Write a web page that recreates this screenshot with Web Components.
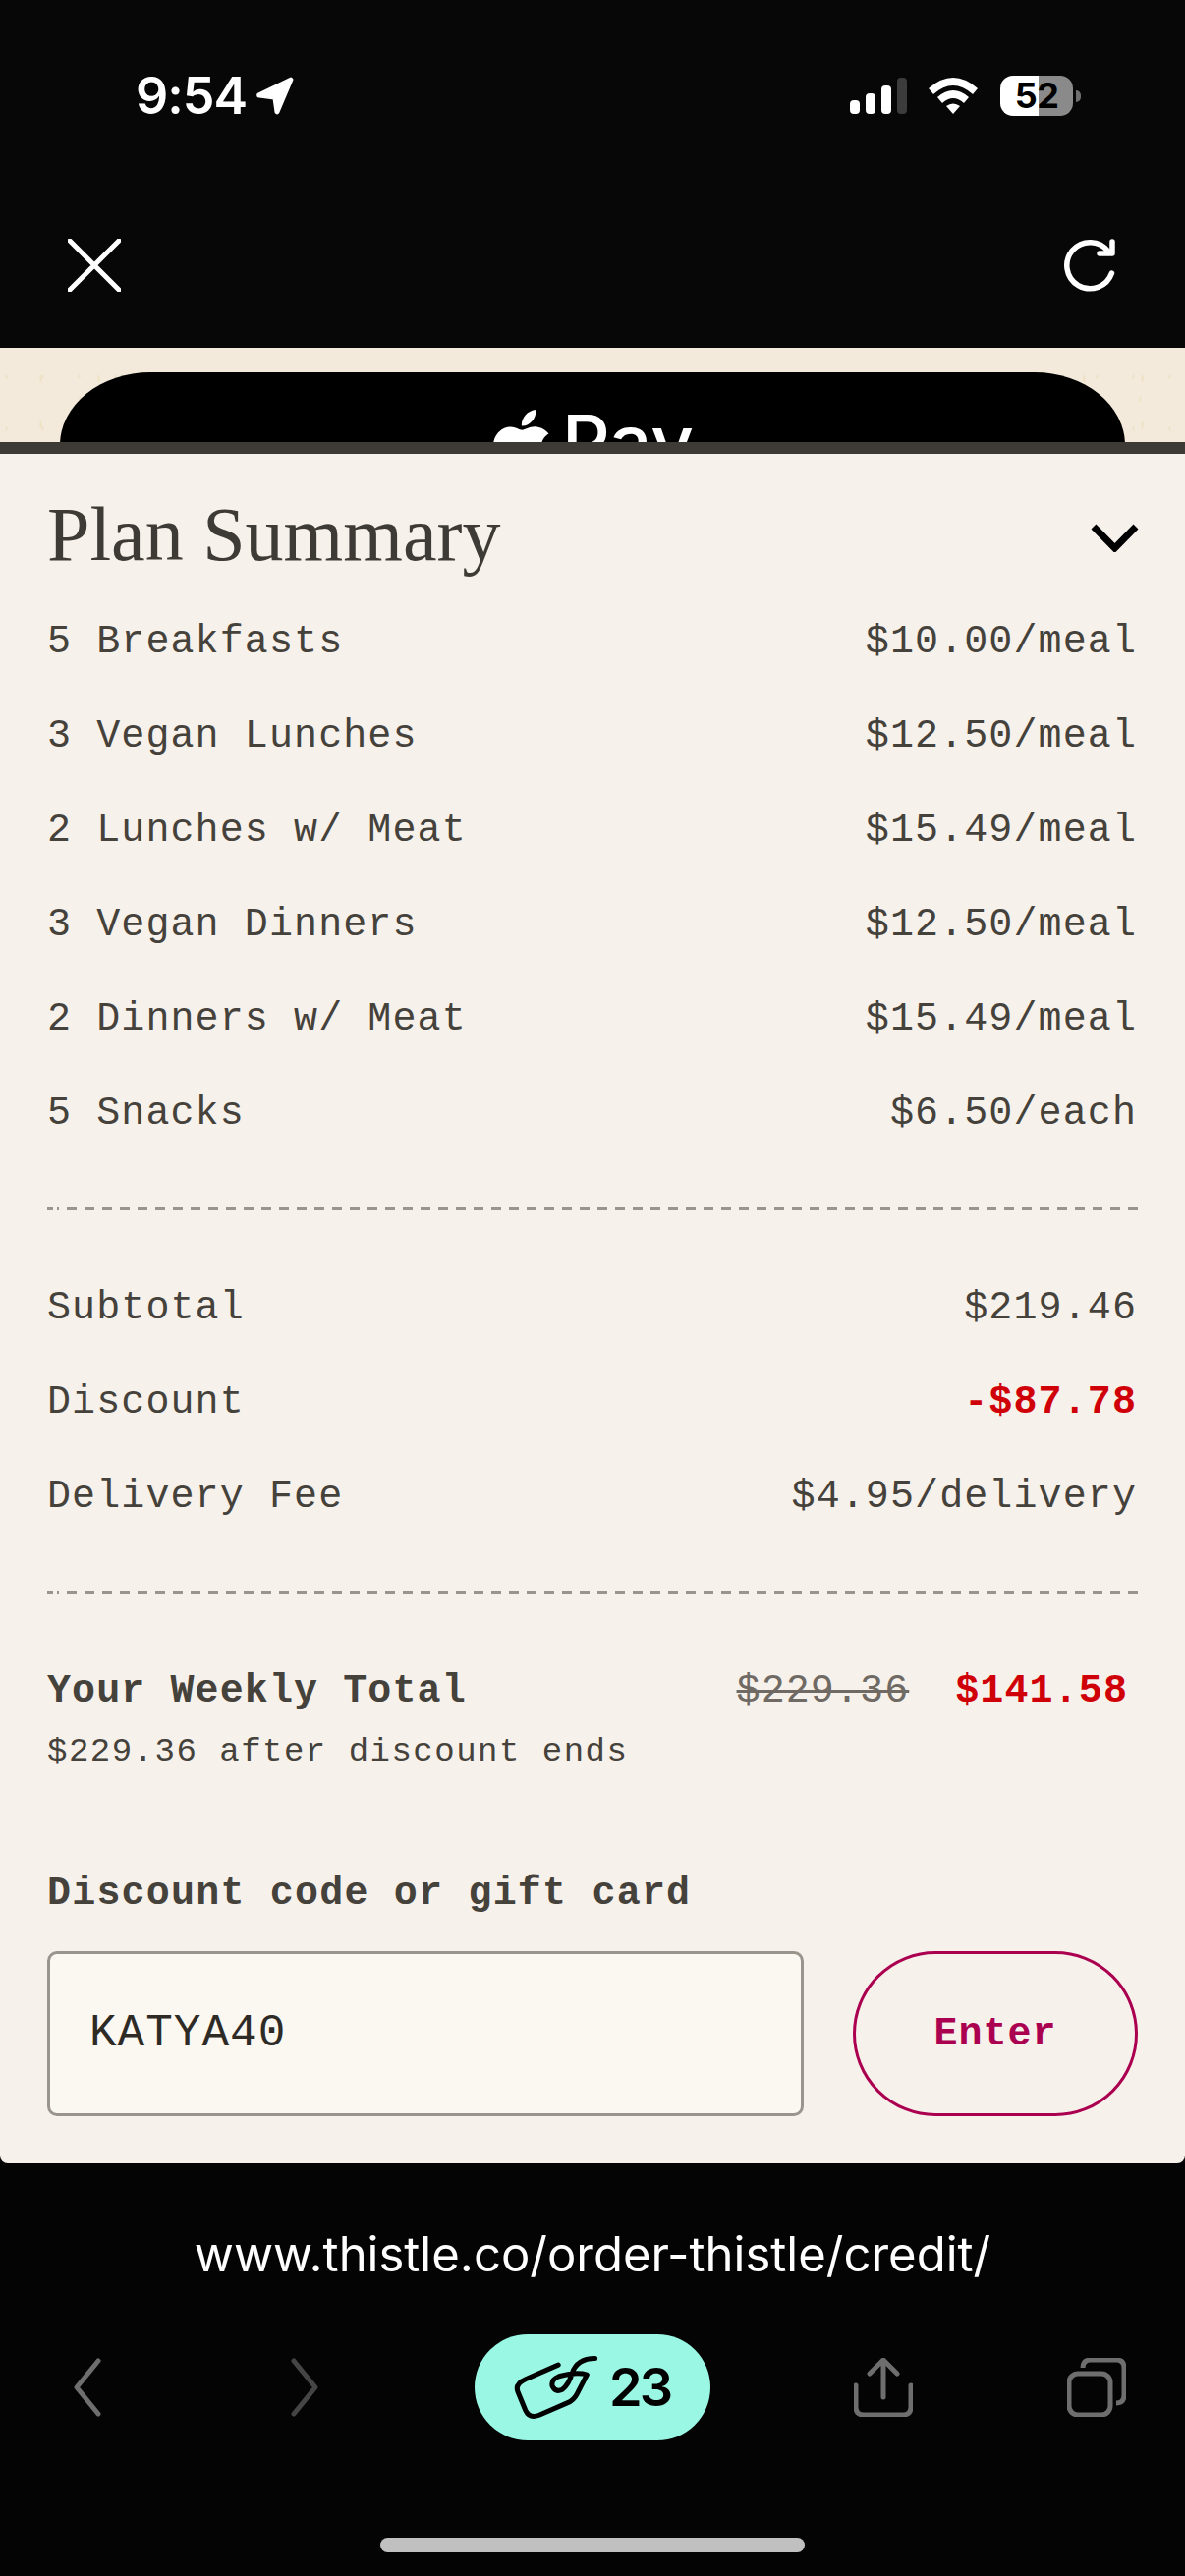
<!DOCTYPE html>
<html>
<head>
<meta charset="utf-8">
<title>Plan Summary</title>
<style>
    html, body { margin: 0; background: #070707; }
    body { width: 1206px; height: 2622px; overflow: hidden; font-family: "Liberation Mono", monospace; }
</style>
</head>
<body>

<template id="status-bar-template">
    <style>
        :host { display: flex; justify-content: space-between; height: 160px; box-sizing: border-box; padding: 77px 106px 0 138px; color: #fff; font-family: Inter, sans-serif; }
        .left { display: flex; gap: 9px; height: 41px; align-items: center; }
        .time { font-size: 52px; font-weight: 600; letter-spacing: -1px; line-height: 41px; }
        .right { display: flex; height: 41px; align-items: center; }
        .battery { margin-left: 23px; width: 74px; height: 41px; border-radius: 13px; background: linear-gradient(90deg, #fff 39px, #8a8a8a 39px); color: #000; font-size: 36px; font-weight: 700; line-height: 41px; text-align: center; letter-spacing: -.5px; }
        .nub { margin-left: 3px; width: 5px; height: 12px; background: #6f6f6f; border-radius: 0 6px 6px 0; }
    </style>
    <div class="left">
        <span class="time">9:54</span>
        <svg width="39" height="39" viewBox="0 0 39 39"><path d="M36 2 3 18q-1 2 1 2l15 2 2 14q1 2 2 0L37 3z" fill="#fff" stroke="#fff" stroke-width="3" stroke-linejoin="round"/></svg>
    </div>
    <div class="right">
        <svg width="58" height="37" viewBox="0 0 58 37">
            <rect x="0" y="23" width="10" height="14" rx="4" fill="#fff"/>
            <rect x="16" y="16" width="10" height="21" rx="4" fill="#fff"/>
            <rect x="32" y="8" width="10" height="29" rx="4" fill="#fff"/>
            <rect x="48" y="0" width="10" height="37" rx="4" fill="#3c3c3c"/>
        </svg>
        <svg width="50" height="37" viewBox="0 0 50 37" style="margin-left:22px">
            <path d="M0 11Q25-11 50 11L45 17Q25-1 5 17Z M9 20Q25 6 41 20L36 26Q25 16 14 26Z M18 29Q25 24 32 29L25 37Z" fill="#fff"/>
        </svg>
        <div class="battery">52</div>
        <div class="nub"></div>
    </div>
</template>

<template id="browser-header-template">
    <style>
        :host { display: flex; justify-content: space-between; height: 194px; box-sizing: border-box; padding: 83px 69px 0; }
        svg { display: block; }
    </style>
    <svg width="54" height="54" viewBox="0 0 54 54"><path d="M2 2 52 52M52 2 2 52" stroke="#fff" stroke-width="5" stroke-linecap="round" fill="none"/></svg>
    <svg width="54" height="54" viewBox="0 0 54 54"><path d="M48.500 35A23.500 23.500 0 1 1 45 13" stroke="#fff" stroke-width="5.500" stroke-linecap="round" fill="none"/><path d="M49 3V15H36" stroke="#fff" stroke-width="5.500" stroke-linecap="round" stroke-linejoin="round" fill="none"/></svg>
</template>

<template id="pay-peek-template">
    <style>
        :host { display: block; height: 96px; box-sizing: border-box; padding: 25px 61px 0; overflow: hidden; background-color: #f3eadb;
            background-image:
                radial-gradient(ellipse 1.5px 5px, #efe2c4 50%, transparent),
                radial-gradient(ellipse 2px 4px, #f0e4ca 50%, transparent),
                radial-gradient(ellipse 1.5px 3px, #eee2ca 50%, transparent);
            background-size: 59px 47px, 83px 61px, 37px 53px;
            background-position: 12px 8px, 40px 22px, 25px 3px; }
        .button { display: flex; justify-content: center; align-items: flex-start; gap: 5px; height: 200px; box-sizing: border-box; padding: 38px 5px 0 0; background: #000; border-radius: 92px / 74px; color: #fff; }
        .label { font-family: Inter, sans-serif; font-weight: 500; font-size: 76px; line-height: 76px; margin-top: -6px; }
    </style>
    <div class="button">
        <svg width="72" height="72" viewBox="0 0 24 24"><path fill="#fff" d="M12.152 6.896c-.948 0-2.415-1.078-3.96-1.04-2.04.027-3.91 1.183-4.961 3.014-2.117 3.675-.546 9.103 1.519 12.09 1.013 1.454 2.208 3.09 3.792 3.039 1.52-.065 2.09-.987 3.935-.987 1.831 0 2.35.987 3.96.948 1.637-.026 2.676-1.48 3.676-2.948 1.156-1.688 1.636-3.325 1.662-3.415-.039-.013-3.182-1.221-3.22-4.857-.026-3.04 2.48-4.494 2.597-4.559-1.429-2.09-3.623-2.324-4.39-2.376-2-.156-3.675 1.09-4.61 1.09zM15.53 3.83c.843-1.012 1.4-2.427 1.245-3.83-1.207.052-2.662.805-3.532 1.818-.78.896-1.454 2.338-1.273 3.714 1.338.104 2.715-.688 3.559-1.701"/></svg>
        <span class="label">Pay</span>
    </div>
</template>

<template id="plan-card-template">
    <style>
        :host { display: block; height: 1752px; box-sizing: border-box; border-top: 12px solid #3e3a35; padding: 0 48px; background: #f7f1eb; border-radius: 0 0 8px 8px; color: #45413b; }
        header { display: flex; justify-content: space-between; align-items: center; height: 142px; box-sizing: border-box; padding-top: 28px; }
        h2 { margin: -6px 0 0; font: 400 78px/1 "Liberation Serif", serif; color: #3e3a35; }
        svg { display: block; margin-right: -1px; }
    </style>
    <header>
        <h2><slot name="title"></slot></h2>
        <svg width="49" height="29" viewBox="0 0 49 29"><path d="M3 3 24.500 25 46 3" stroke="#000" stroke-width="7" fill="none"/></svg>
    </header>
    <slot></slot>
</template>

<template id="summary-row-template">
    <style>
        :host { display: flex; justify-content: space-between; height: 96px; font-size: 40px; line-height: 99px; letter-spacing: 1.1px; white-space: pre; }
        .value { margin-right: 1px; }
        :host([discount]) .value { color: #cf0007; font-weight: 700; }
    </style>
    <span><slot></slot></span>
    <span class="value"><slot name="value"></slot></span>
</template>

<template id="dash-rule-template">
    <style>
        :host { display: block; height: 3px; margin: 49px 0 50px;
            background:
                linear-gradient(#9a958c, #9a958c) 0 0 / 6px 100% no-repeat,
                repeating-linear-gradient(90deg, #9a958c 0 1.700px, transparent 1.700px 10.300px, #9a958c 10.300px 18px) 10px 0 / 1100px 100% no-repeat; }
    </style>
</template>

<template id="weekly-total-template">
    <style>
        :host { display: block; padding-top: 2px; }
        .top { display: flex; justify-content: space-between; font-size: 40px; line-height: 96px; letter-spacing: 1.1px; font-weight: 700; }
        .prices { display: flex; gap: 47px; margin-right: 10px; }
        .old { font-weight: 400; color: #6f6a64; text-decoration: line-through; text-decoration-thickness: 3px; }
        .new { color: #cf0007; }
        .note { font-size: 34px; line-height: 40px; letter-spacing: 1.5px; margin-top: -7px; }
    </style>
    <div class="top">
        <span>Your Weekly Total</span>
        <span class="prices"><span class="old">$229.36</span><span class="new">$141.58</span></span>
    </div>
    <div class="note">$229.36 after discount ends</div>
</template>

<template id="code-form-template">
    <style>
        :host { display: block; margin-top: 95px; }
        label { display: block; font-size: 40px; line-height: 60px; letter-spacing: 1.2px; font-weight: 700; }
        .row { display: flex; gap: 50px; margin-top: 28px; height: 168px; }
        .field { flex: 1; box-sizing: border-box; border: 3px solid #9a958c; border-radius: 10px; background: #fbf8f2; padding-left: 40px; display: flex; align-items: center; font-size: 46px; letter-spacing: 1px; color: #2e2b27; }
        .enter { width: 290px; box-sizing: border-box; border: 3px solid #ab0050; border-radius: 84px; display: flex; align-items: center; justify-content: center; color: #ab0050; font-size: 40px; letter-spacing: 1px; font-weight: 700; }
    </style>
    <label>Discount code or gift card</label>
    <div class="row">
        <div class="field">KATYA40</div>
        <div class="enter">Enter</div>
    </div>
</template>

<template id="url-bar-template">
    <style>
        :host { display: block; height: 174px; box-sizing: border-box; padding-top: 63px; text-align: center; background: #040404; color: #fff; font: 400 49px/60px Inter, sans-serif; }
    </style>
    <slot></slot>
</template>

<template id="bottom-toolbar-template">
    <style>
        :host { display: flex; align-items: center; height: 108px; padding-left: 75px; background: #040404; }
        svg { display: block; flex: none; }
        .pill { display: flex; align-items: center; gap: 11px; width: 240px; height: 108px; box-sizing: border-box; padding-left: 39px; border-radius: 54px; background: #9af7e4; color: #000; font: 600 54px/1 Inter, sans-serif; letter-spacing: -3px; }
        .forward { margin-left: 193px; }
        .pill { margin-left: 159px; }
        .share { margin-left: 146px; }
        .tabs { margin-left: 157px; }
    </style>
    <svg width="28" height="60" viewBox="0 0 28 60"><path d="M25 3 3 30 25 57" stroke="#6e6e6e" stroke-width="5" stroke-linecap="round" stroke-linejoin="round" fill="none"/></svg>
    <svg class="forward" width="28" height="60" viewBox="0 0 28 60"><path d="M3 3 25 30 3 57" stroke="#454545" stroke-width="5" stroke-linecap="round" stroke-linejoin="round" fill="none"/></svg>
    <div class="pill">
        <svg width="87" height="67" viewBox="245 140 260 200"><path d="M383 170 285 213Q250 228 260 252L283 308Q295 335 325 323L410 286Q430 278 440 258L470 200Q440 190 385 205 360 215 365 235 375 255 395 245 415 230 425 195 440 150 495 150" stroke="#000" stroke-width="15" stroke-linecap="round" stroke-linejoin="round" fill="none"/></svg>
        <span>23</span>
    </div>
    <svg class="share" width="60" height="60" viewBox="0 0 60 60"><path d="M30 3V40M16 16 30 2 44 16M2 28V50Q2 58 10 58H50Q58 58 58 50V28" stroke="#6e6e6e" stroke-width="5" stroke-linecap="round" stroke-linejoin="round" fill="none"/></svg>
    <svg class="tabs" width="60" height="60" viewBox="0 0 60 60"><rect x="2" y="16" width="42" height="42" rx="9" stroke="#6e6e6e" stroke-width="5" fill="none"/><path d="M16 10Q16 2 24 2H50Q58 2 58 10V38Q58 46 50 46" stroke="#6e6e6e" stroke-width="5" fill="none"/></svg>
</template>

<template id="home-bar-template">
    <style>
        :host { display: block; padding: 99px 387px 0; height: 138px; box-sizing: border-box; background: #040404; }
        div { height: 15px; border-radius: 8px; background: #c0c0c0; }
    </style>
    <div></div>
</template>

<script type="text/javascript">
// every element just clones its own template into an open shadow root
const names = ['status-bar', 'browser-header', 'pay-peek', 'plan-card', 'summary-row', 'dash-rule', 'weekly-total', 'code-form', 'url-bar', 'bottom-toolbar', 'home-bar'];

names.forEach(name => {
    const template = document.querySelector('#' + name + '-template');
    customElements.define(name, class extends HTMLElement {
        connectedCallback() {
            if (this.shadowRoot) return;
            this.attachShadow({mode: 'open'}).appendChild(template.content.cloneNode(true));
        }
    });
});
</script>

<status-bar></status-bar>
<browser-header></browser-header>
<pay-peek></pay-peek>
<plan-card>
    <span slot="title">Plan Summary</span>
    <summary-row>5 Breakfasts<span slot="value">$10.00/meal</span></summary-row>
    <summary-row>3 Vegan Lunches<span slot="value">$12.50/meal</span></summary-row>
    <summary-row>2 Lunches w/ Meat<span slot="value">$15.49/meal</span></summary-row>
    <summary-row>3 Vegan Dinners<span slot="value">$12.50/meal</span></summary-row>
    <summary-row>2 Dinners w/ Meat<span slot="value">$15.49/meal</span></summary-row>
    <summary-row>5 Snacks<span slot="value">$6.50/each</span></summary-row>
    <dash-rule></dash-rule>
    <summary-row>Subtotal<span slot="value">$219.46</span></summary-row>
    <summary-row discount>Discount<span slot="value">-$87.78</span></summary-row>
    <summary-row>Delivery Fee<span slot="value">$4.95/delivery</span></summary-row>
    <dash-rule></dash-rule>
    <weekly-total></weekly-total>
    <code-form></code-form>
</plan-card>
<url-bar>www.thistle.co/order-thistle/credit/</url-bar>
<bottom-toolbar></bottom-toolbar>
<home-bar></home-bar>

</body>
</html>
